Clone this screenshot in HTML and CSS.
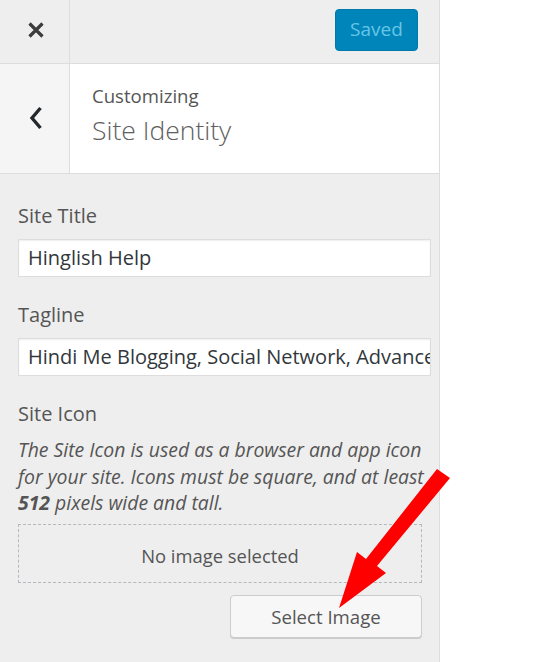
FILE: index.html
```html
<!DOCTYPE html>
<html lang="en">
<head>
<meta charset="utf-8">
<title>Customizing Site Identity</title>
<link rel="stylesheet" href="styles.css">
</head>
<body>
<div class="panel">
  <header class="topbar">
    <div class="close">
      <svg width="18" height="18" viewBox="0 0 18 18"><path d="M2.5 2.5 L15.5 15.5 M15.5 2.5 L2.5 15.5" stroke="#3c3c3c" stroke-width="3.2" fill="none"/></svg>
    </div>
    <button class="save">Saved</button>
  </header>
  <div class="section-head">
    <div class="back">
      <svg width="14" height="24" viewBox="0 0 14 24"><path d="M11.5 2 L3 12 L11.5 22" stroke="#23282d" stroke-width="3.4" fill="none"/></svg>
    </div>
    <div class="title-block">
      <div class="action">Customizing</div>
      <div class="section-title">Site Identity</div>
    </div>
  </div>
  <div class="controls">
    <div class="control first">
      <div class="label">Site Title</div>
      <div class="input">Hinglish Help</div>
    </div>
    <div class="control">
      <div class="label">Tagline</div>
      <div class="input">Hindi Me Blogging, Social Network, Advance Tips</div>
    </div>
    <div class="control">
      <div class="label">Site Icon</div>
      <p class="desc">The Site Icon is used as a browser and app icon for your site. Icons must be square, and at least <strong>512</strong> pixels wide and tall.</p>
      <div class="placeholder">No image selected</div>
      <div class="actions"><button class="select">Select Image</button></div>
    </div>
  </div>
</div>
<svg class="arrow" width="534" height="662" viewBox="0 0 534 662"><polygon points="437,469 450,478 377,566 386,573 339,608 357,552 366,559" fill="#ff0000"/></svg>
</body>
</html>
```
FILE: styles.css
```css
html, body {
  margin: 0;
  padding: 0;
  background: #fff;
}
body {
  font-family: "Open Sans", "Noto Sans", sans-serif;
  color: #555;
  position: relative;
  width: 534px;
  height: 662px;
  overflow: hidden;
}
.panel {
  width: 439px;
  height: 662px;
  background: #eee;
  border-right: 1px solid #ddd;
}
.topbar {
  display: flex;
  height: 63px;
  border-bottom: 1px solid #ddd;
  background: #eee;
}
.close {
  width: 70px;
  border-right: 1px solid #ddd;
  display: flex;
  align-items: center;
  justify-content: center;
  padding-bottom: 4px;
  padding-left: 3px;
  box-sizing: border-box;
}
.save {
  margin: 9px 21px 0 auto;
  width: 83px;
  height: 42px;
  background: #0085ba;
  border: 1px solid #0079aa;
  border-radius: 4px;
  color: #66c5e6;
  font-family: "Open Sans", "Noto Sans", sans-serif;
  font-size: 19px;
  padding: 0 0 2px;
}
.section-head {
  display: flex;
  height: 109px;
  border-bottom: 1px solid #ddd;
  background: #fff;
}
.back {
  width: 70px;
  background: #f5f5f5;
  border-right: 1px solid #ddd;
  display: flex;
  align-items: center;
  justify-content: center;
  padding-left: 3px;
  padding-bottom: 2px;
  box-sizing: border-box;
}
.title-block {
  padding: 19px 0 0 22px;
}
.action {
  font-size: 18.6px;
  line-height: 26px;
  color: #555;
}
.section-title {
  font-size: 26.5px;
  font-weight: 300;
  line-height: 34px;
  color: #606060;
  margin-top: 4px;
}
.controls {
  padding: 0 18px;
}
.control {
  padding-top: 25px;
}
.control.first {
  padding-top: 29px;
}
.label {
  font-size: 20px;
  line-height: 26px;
  color: #555;
}
.input {
  margin-top: 10px;
  width: 413px;
  height: 38px;
  box-sizing: border-box;
  background: #fff;
  border: 1px solid #ddd;
  box-shadow: inset 0 1px 2px rgba(0,0,0,0.07);
  padding: 3px 0 0 9px;
  font-size: 20px;
  line-height: 30px;
  color: #32373c;
  white-space: nowrap;
  overflow: hidden;
}
.desc {
  margin: 10px 0 0;
  font-size: 19.4px;
  line-height: 26.5px;
  font-style: italic;
  color: #555;
  width: 412px;
}
.desc strong {
  font-weight: 700;
}
.placeholder {
  margin-top: 7px;
  width: 404px;
  height: 59px;
  box-sizing: border-box;
  border: 1px dashed #b4b9be;
  display: flex;
  align-items: center;
  justify-content: center;
  padding-top: 4px;
  font-size: 18.4px;
  color: #555;
}
.actions {
  display: flex;
  justify-content: flex-end;
  width: 404px;
  margin-top: 12px;
}
.select {
  width: 192px;
  height: 43px;
  background: #f7f7f7;
  border: 1px solid #ccc;
  border-radius: 4px;
  box-shadow: 0 1px 0 #ccc;
  font-family: "Open Sans", "Noto Sans", sans-serif;
  font-size: 18.6px;
  color: #555;
  padding: 1px 0 0;
}
.arrow {
  position: absolute;
  left: 0;
  top: 0;
  pointer-events: none;
}
```
